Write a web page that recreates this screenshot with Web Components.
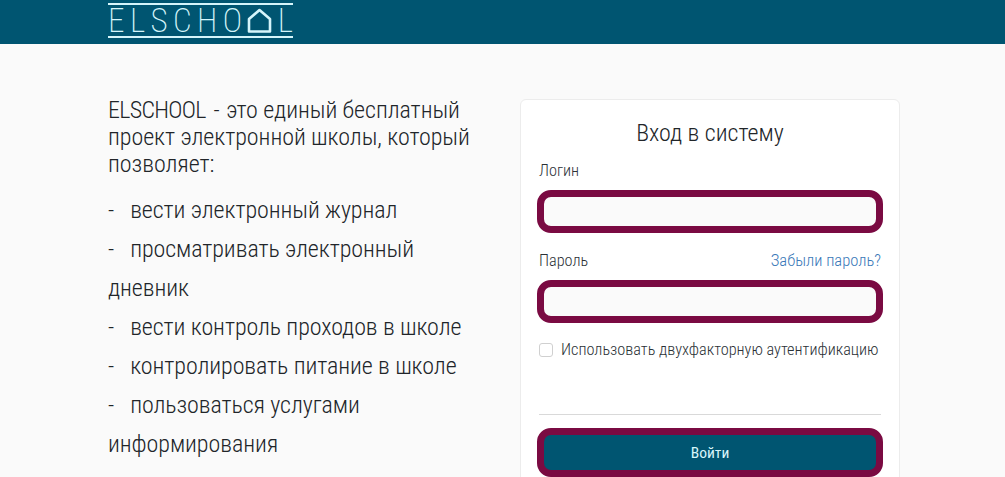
<!DOCTYPE html>
<html lang="ru">
<head>
<meta charset="utf-8">
<title>Elschool</title>
<style>
    html, body { margin: 0; height: 477px; overflow: hidden; background: #fafafa; }
    body { font-family: "Roboto", "Liberation Sans", sans-serif; font-weight: 300; font-stretch: 75%; color: #212529; }
    .brand { letter-spacing: -0.7px; word-spacing: 3px; margin-right: 2px; }
</style>
</head>
<body>
<els-header></els-header>
<els-main>
    <els-about slot="about">
        <div slot="lead"><span class="brand">ELSCHOOL -</span> <span>это единый бесплатный</span> <span>проект электронной школы, который позволяет:</span></div>
        <p>-&nbsp;&nbsp; вести электронный журнал</p>
        <p>-&nbsp;&nbsp; просматривать электронный дневник</p>
        <p>-&nbsp;&nbsp; вести контроль проходов в школе</p>
        <p>-&nbsp;&nbsp; контролировать питание в школе</p>
        <p>-&nbsp;&nbsp; пользоваться услугами информирования</p>
    </els-about>
    <els-login slot="login"></els-login>
</els-main>

<script>
// Шапка с логотипом
class ElsHeader extends HTMLElement {
    constructor() {
        super();
        this.attachShadow({ mode: 'open' }).innerHTML = `
            <style>
                :host { display: block; height: 44px; background: #005571; padding-left: 108px; box-sizing: border-box; overflow: hidden; }
                .logo { display: inline-flex; align-items: center; width: 185px; height: 35px; margin-top: 3px; box-sizing: border-box;
                    border-top: 2px solid #d5f5fb; border-bottom: 2px solid #d5f5fb; color: #d5f5fb;
                    font-size: 33px; font-weight: 200; justify-content: space-between; line-height: 31px; }
                svg { width: 25px; height: 25px; display: block; }
            </style>
            <div class="logo">
                <span>E</span><span>L</span><span>S</span><span>C</span><span>H</span><span>O</span>
                <svg viewBox="0 0 25 25" fill="none" stroke="#d5f5fb" stroke-width="2.6"><path d="M2 23.5V11L12.5 2 23 11v12.5z" stroke-linejoin="round"/></svg>
                <span>L</span>
            </div>`;
    }
}

// Основная раскладка на две колонки
class ElsMain extends HTMLElement {
    constructor() {
        super();
        this.attachShadow({ mode: 'open' }).innerHTML = `
            <style>
                :host { display: grid; grid-template-columns: 412px 380px; padding: 55px 0 0 108px; }
            </style>
            <slot name="about"></slot>
            <slot name="login"></slot>`;
    }
}

// Левая колонка с описанием
class ElsAbout extends HTMLElement {
    constructor() {
        super();
        this.attachShadow({ mode: 'open' }).innerHTML = `
            <style>
                :host { display: block; color: #212529; width: 375px; }
                .lead { font-size: 24px; line-height: 27px; margin: -2px 0 13px; letter-spacing: -0.05px; }
                ::slotted(p) { margin: 0; font-size: 24px; line-height: 39px; letter-spacing: -0.07px; }
            </style>
            <div class="lead"><slot name="lead"></slot></div>
            <slot></slot>`;
    }
}

// Поле формы
class ElsField extends HTMLElement {
    constructor() {
        super();
        this.attachShadow({ mode: 'open' }).innerHTML = `
            <style>
                :host { display: block; }
                .top { display: flex; justify-content: space-between; font-size: 16.3px; line-height: 24px; height: 24px; margin-bottom: 7px; color: #2b3136; }
                .box { display: block; width: calc(100% + 4px); margin: 0 -2px; height: 43px; box-sizing: border-box; border: 7px solid #7a0a42; border-radius: 14px; background: #fafafa; outline: none; }
                ::slotted(a) { color: #3a78b8; text-decoration: none; font-size: 16.6px; }
            </style>
            <div class="top"><span>${this.getAttribute('label')}</span><slot></slot></div>
            <input class="box" type="${this.getAttribute('type') || 'text'}">`;
    }
}

// Карточка входа
class ElsLogin extends HTMLElement {
    constructor() {
        super();
        this.attachShadow({ mode: 'open' }).innerHTML = `
            <style>
                :host { display: block; width: 380px; box-sizing: border-box; border: 1px solid #ececec; border-radius: 6px; background: #fff; padding: 17px 18px 20px; }
                h2 { margin: 0 0 10px; font-size: 24px; line-height: 32px; font-weight: 300; text-align: center; color: #212529; }
                els-field + els-field { margin-top: 16px; }
                label { display: flex; align-items: center; gap: 8px; margin-top: 15px; font-size: 16.3px; line-height: 24px; color: #2b3136; }
                .check { width: 14px; height: 14px; box-sizing: border-box; border: 1px solid #d0d0d0; border-radius: 3px; background: #fff; }
                hr { border: 0; border-top: 1px solid #d9d9d9; margin: 52px 0 13px; }
                button { display: block; width: calc(100% + 4px); margin: 0 -2px; height: 49px; box-sizing: border-box; border: 7px solid #7a0a42; border-radius: 14px; background: #005571; color: #d8f6fb; font: inherit; font-size: 15.5px; font-weight: 400; }
            </style>
            <h2>Вход в систему</h2>
            <els-field label="Логин"></els-field>
            <els-field label="Пароль" type="password"><a href="#">Забыли пароль?</a></els-field>
            <label><span class="check"></span>Использовать двухфакторную аутентификацию</label>
            <hr>
            <button>Войти</button>`;
    }
}

customElements.define('els-header', ElsHeader);
customElements.define('els-main', ElsMain);
customElements.define('els-about', ElsAbout);
customElements.define('els-field', ElsField);
customElements.define('els-login', ElsLogin);
</script>
</body>
</html>
